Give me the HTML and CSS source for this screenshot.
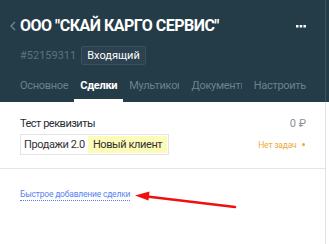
FILE: index.html
```html
<!DOCTYPE html>
<html lang="ru">
<head>
    <meta charset="UTF-8">
    <title>Сделки</title>
    <link rel="stylesheet" href="styles.css">
</head>
<body>
<div class="card">

    <!-- Шапка контакта -->
    <header class="top">
        <div class="title-row">
            <svg class="back" width="15" height="10" viewBox="0 0 15 10">
                <polyline points="10,1 6,5 10,9" fill="none" stroke="#71848f" stroke-width="1.4"/>
            </svg>
            <h1>ООО "СКАЙ КАРГО СЕРВИС"</h1>
            <svg class="more" width="10" height="3" viewBox="0 0 10 3">
                <rect x="0" y="0" width="2.5" height="2.5" fill="#fff"/>
                <rect x="3.7" y="0" width="2.5" height="2.5" fill="#fff"/>
                <rect x="7.4" y="0" width="2.5" height="2.5" fill="#fff"/>
            </svg>
        </div>
        <div class="meta">
            <span class="id">#52159311</span>
            <span class="status">Входящий</span>
        </div>
        <nav class="tabs">
            <a>Основное</a>
            <a class="active">Сделки</a>
            <a class="cut">Мультиком</a>
            <a class="cut">Документы</a>
            <a>Настроить</a>
        </nav>
    </header>

    <!-- Список сделок -->
    <div class="deal">
        <div class="deal-row">
            <span class="deal-name">Тест реквизиты</span>
            <span class="price">0 ₽</span>
        </div>
        <div class="deal-row">
            <span class="pipeline">Продажи 2.0 <span class="stage">Новый клиент</span></span>
            <span class="tasks">Нет задач <i class="dot"></i></span>
        </div>
    </div>

    <div class="quick">
        <a class="quick-link">Быстрое добавление сделки</a>
        <svg class="arrow" width="104" height="21" viewBox="0 0 104 21">
            <path d="M101 18 L13 7.5" stroke="#f01010" stroke-width="2.6" stroke-linecap="round"/>
            <path d="M1 6.5 L15.5 2.5 L14.5 11.5 Z" fill="#f01010"/>
        </svg>
    </div>

</div>
</body>
</html>
```

FILE: styles.css
```css
* {
    margin: 0;
    padding: 0;
    box-sizing: border-box;
}

body {
    font-family: Roboto, "Noto Sans", sans-serif;
    background: #fff;
}

.card {
    width: 326px;
    height: 244px;
    border-right: 1px solid #e2e2e2;
}

.top {
    background: #243b48;
    padding: 14px 19px 0 20px;
    border-right: 1px solid #3c515e;
    margin-right: -1px;
    box-shadow: 3px 0 0 #243b48;
}

.title-row {
    display: flex;
    align-items: center;
    height: 22px;
}

.back {
    margin-left: -15px;
    margin-top: 2px;
}

.title-row h1 {
    flex: 1;
    color: #fff;
    font-size: 16px;
    font-weight: bold;
    letter-spacing: -0.5px;
    white-space: nowrap;
    line-height: 22px;
    padding-top: 2px;
}

.more {
    margin-top: 2px;
}

.meta {
    display: flex;
    align-items: center;
    gap: 5px;
    margin-top: 10px;
}

.id {
    color: #5d7280;
    font-size: 11px;
}

.status {
    color: #fff;
    font-size: 11px;
    background: #2c4250;
    border: 1px solid #3a505e;
    border-radius: 2px;
    padding: 1px 5px;
    line-height: 15px;
}

.tabs {
    display: flex;
    gap: 12px;
    margin-top: 14px;
    white-space: nowrap;
}

.tabs a {
    color: #6c8190;
    font-size: 11px;
    letter-spacing: -0.3px;
    padding-bottom: 7px;
    border-bottom: 3px solid transparent;
}

.tabs a.active {
    color: #fff;
    font-weight: bold;
    border-bottom-color: #fff;
    margin: 0 -6px;
    padding: 0 6px 7px;
}

.tabs a.cut {
    width: 53px;
    overflow: hidden;
}

.deal {
    padding: 15px 19px 13px 20px;
    border-bottom: 1px solid #e6e6e6;
}

.deal-row {
    display: flex;
    justify-content: space-between;
    align-items: center;
}

.deal-name {
    color: #262d36;
    font-size: 11px;
    letter-spacing: -0.5px;
}

.price {
    color: #8a9299;
    font-size: 11px;
}

.deal-row + .deal-row {
    margin-top: 4px;
}

.pipeline {
    display: flex;
    align-items: center;
    gap: 3px;
    border: 1px solid #e4e4e4;
    padding: 1px 1px 1px 3px;
    color: #333;
    font-size: 11px;
    letter-spacing: -0.4px;
}

.stage {
    background: #fdfbb8;
    padding: 2px 5px;
}

.tasks {
    color: #eeaa36;
    font-size: 8.5px;
    letter-spacing: -0.2px;
    display: flex;
    align-items: center;
    gap: 5px;
}

.dot {
    width: 3.5px;
    height: 3.5px;
    border-radius: 50%;
    background: #eeaa36;
    margin-right: 1px;
}

.quick {
    display: flex;
    align-items: flex-start;
    padding: 20px 0 0 20px;
}

.quick-link {
    color: #5a82ee;
    font-size: 8.5px;
    letter-spacing: -0.2px;
    border-bottom: 1px dotted #5a82ee;
    line-height: 11px;
}

.arrow {
    margin: 0 0 0 4px;
}
```
